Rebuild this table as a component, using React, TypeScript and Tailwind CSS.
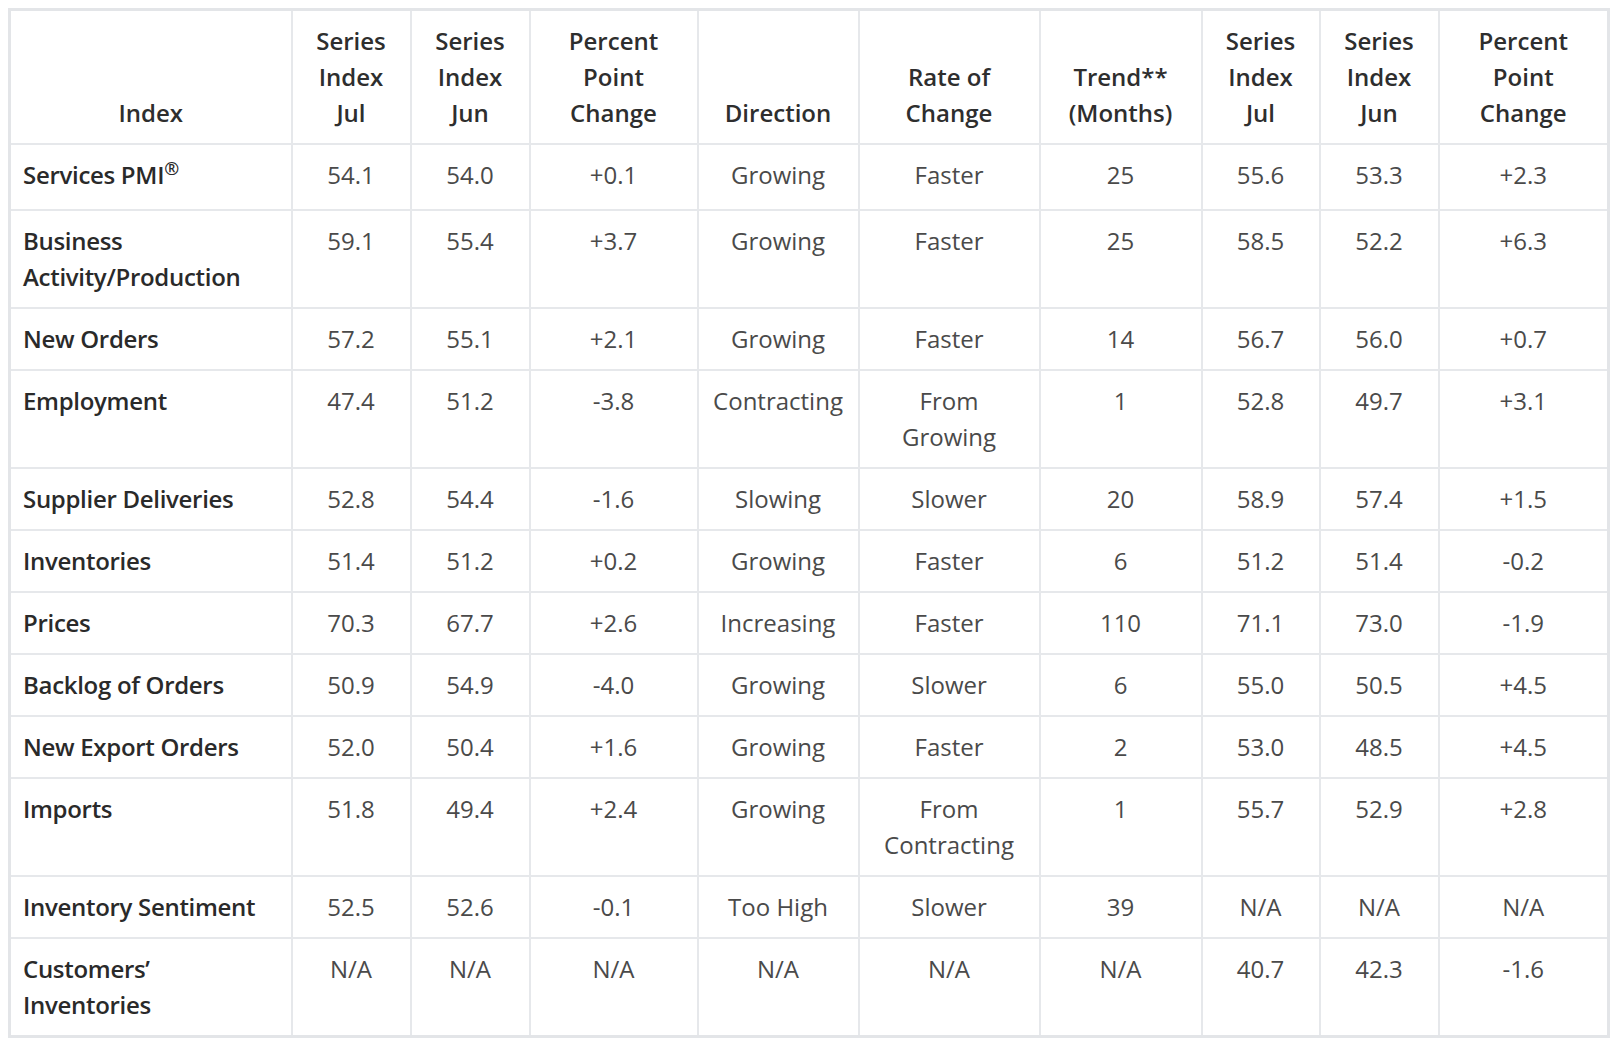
import React from 'react';

type Row = {
  label: React.ReactNode;
  values: string[];
  tall?: boolean;
};

const widths = ['w-[282px]', 'w-[119px]', 'w-[119px]', 'w-[168px]', 'w-[161px]', 'w-[181px]', 'w-[162px]', 'w-[118px]', 'w-[119px]', 'w-[170px]'];

const headers: React.ReactNode[] = [
  'Index',
  <>Series<br />Index<br />Jul</>,
  <>Series<br />Index<br />Jun</>,
  <>Percent<br />Point<br />Change</>,
  'Direction',
  <>Rate of<br />Change</>,
  <>Trend**<br />(Months)</>,
  <>Series<br />Index<br />Jul</>,
  <>Series<br />Index<br />Jun</>,
  <>Percent<br />Point<br />Change</>,
];

const rows: Row[] = [
  { label: <>Services PMI<sup className="text-[18px] -top-[9px]">®</sup></>, values: ['54.1', '54.0', '+0.1', 'Growing', 'Faster', '25', '55.6', '53.3', '+2.3'], tall: true },
  { label: <>Business<br />Activity/Production</>, values: ['59.1', '55.4', '+3.7', 'Growing', 'Faster', '25', '58.5', '52.2', '+6.3'] },
  { label: 'New Orders', values: ['57.2', '55.1', '+2.1', 'Growing', 'Faster', '14', '56.7', '56.0', '+0.7'] },
  { label: 'Employment', values: ['47.4', '51.2', '-3.8', 'Contracting', 'From Growing', '1', '52.8', '49.7', '+3.1'] },
  { label: 'Supplier Deliveries', values: ['52.8', '54.4', '-1.6', 'Slowing', 'Slower', '20', '58.9', '57.4', '+1.5'] },
  { label: 'Inventories', values: ['51.4', '51.2', '+0.2', 'Growing', 'Faster', '6', '51.2', '51.4', '-0.2'] },
  { label: 'Prices', values: ['70.3', '67.7', '+2.6', 'Increasing', 'Faster', '110', '71.1', '73.0', '-1.9'] },
  { label: 'Backlog of Orders', values: ['50.9', '54.9', '-4.0', 'Growing', 'Slower', '6', '55.0', '50.5', '+4.5'] },
  { label: 'New Export Orders', values: ['52.0', '50.4', '+1.6', 'Growing', 'Faster', '2', '53.0', '48.5', '+4.5'] },
  { label: 'Imports', values: ['51.8', '49.4', '+2.4', 'Growing', 'From Contracting', '1', '55.7', '52.9', '+2.8'] },
  { label: 'Inventory Sentiment', values: ['52.5', '52.6', '-0.1', 'Too High', 'Slower', '39', 'N/A', 'N/A', 'N/A'] },
  { label: <>Customers’<br />Inventories</>, values: ['N/A', 'N/A', 'N/A', 'N/A', 'N/A', 'N/A', '40.7', '42.3', '-1.6'] },
];

const cell = 'border-2 border-[#e6e8eb] px-3 pt-3';

export default function App() {
  return (
    <div className="min-h-screen bg-white p-2 text-[24px] leading-[36px]" style={{ fontFamily: '"Open Sans", "Noto Sans", sans-serif' }}>
      <table className="table-fixed w-[1599px] border-collapse border-[3px] border-[#e3e5e8]">
        <colgroup>
          {widths.map((w, i) => <col key={i} className={w} />)}
        </colgroup>
        <thead>
          <tr>
            {headers.map((h, i) => (
              <th key={i} className={`${cell} pb-3 align-bottom text-center font-semibold text-[#2e2e2e]`}>{h}</th>
            ))}
          </tr>
        </thead>
        <tbody>
          {rows.map((r, i) => {
            const pb = r.tall ? 'pb-4' : 'pb-3';
            return (
              <tr key={i}>
                <td className={`${cell} ${pb} align-top text-left font-semibold text-[#2a2a2a] tracking-[-0.3px]`}>{r.label}</td>
                {r.values.map((v, j) => (
                  <td key={j} className={`${cell} ${pb} align-top text-center text-[#4a4a4a]`}>{v}</td>
                ))}
              </tr>
            );
          })}
        </tbody>
      </table>
    </div>
  );
}
